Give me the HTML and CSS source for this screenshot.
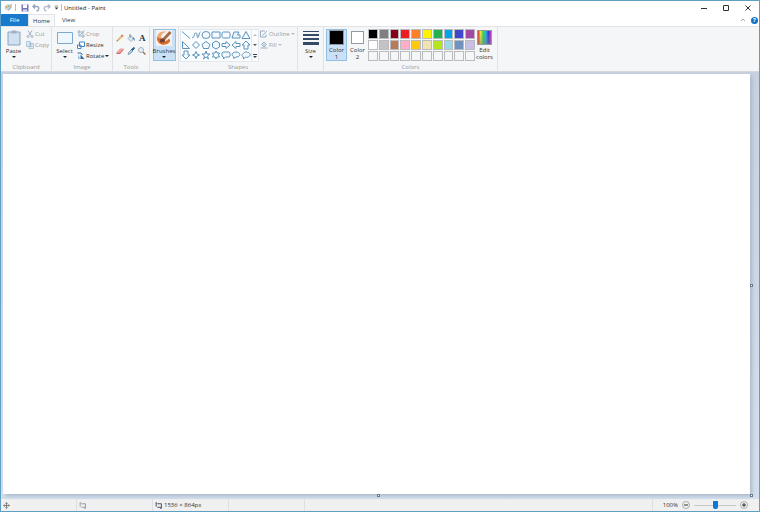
FILE: index.html
```
<!DOCTYPE html>
<html lang="en">
<head>
    <meta charset="UTF-8">
    <meta name="viewport" content="width=device-width, initial-scale=1.0">
    <title>Untitled - Paint</title>
    <link rel="stylesheet" href="styles.css">
</head>
<body>
    <div class="titlebar">
        <svg class="app-icon" viewBox="0 0 20 20"><path d="M2 10c0-5 5-7 11-6 5 1 5 6 2 9-4 4-13 3-13-3z" fill="#c3dcea" stroke="#9dbccd"/><circle cx="6" cy="9" r="2" fill="#e6a34b"/><circle cx="10" cy="7" r="2" fill="#7fb58d"/><path d="M10 17L17 2" stroke="#cf9a70" stroke-width="2"/></svg>
        <span class="divider"></span>
        <button class="quick save" aria-label="Save"><svg viewBox="0 0 16 16"><path d="M1 1h14v14H1z" fill="#7775b5"/><path d="M4 1h8v7H4z" fill="#fff"/><path d="M4 11h8v4H4z" fill="#dcdcf0"/></svg></button>
        <button class="quick" aria-label="Undo"><svg viewBox="0 0 16 16" fill="none" stroke="#97a5c4" stroke-width="3"><path d="M6 1L2 5l4 4M2 5h8c5 0 5 8-1 9"/></svg></button>
        <button class="quick" aria-label="Redo"><svg viewBox="0 0 16 16" fill="none" stroke="#b4bdce" stroke-width="3"><path d="M10 1l4 4-4 4M14 5H6c-5 0-5 8 1 9"/></svg></button>
        <button class="quick more" aria-label="Customize Quick Access Toolbar"><svg viewBox="0 0 8 8"><path d="M1 1h6v1H1zM1 4h6L4 7z" fill="#333"/></svg></button>
        <span class="divider"></span>
        <h1>Untitled - Paint</h1>
        <div class="window-buttons">
            <button aria-label="Minimize"><svg viewBox="0 0 6 6" fill="none" stroke="#333"><path d="M0 3.5h6"/></svg></button>
            <button aria-label="Maximize"><svg viewBox="0 0 6 6" fill="none" stroke="#333"><path d="M.5.5h5v5h-5z"/></svg></button>
            <button aria-label="Close"><svg viewBox="0 0 6 6" fill="none" stroke="#333"><path d="M.5.5l5 5M5.5.5l-5 5"/></svg></button>
        </div>
    </div>

    <nav class="tabs">
        <button class="tab file">File</button>
        <button class="tab active">Home</button>
        <button class="tab">View</button>
        <div class="tab-tools">
            <button aria-label="Minimize the Ribbon"><svg viewBox="0 0 6 6" fill="none" stroke="#aaa"><path d="M1 4l2-2 2 2"/></svg></button>
            <button class="help" aria-label="Help">?</button>
        </div>
    </nav>

    <div class="ribbon">
        <section class="group clipboard">
            <div class="tools">
                <button class="big"><svg class="big-icon" viewBox="0 0 32 32"><path d="M4 4h24v26H4z" fill="#cfe0f1" stroke="#8ba3bb" stroke-width="2"/><path d="M11 1h10v6H11z" fill="#9fb0c2"/></svg>Paste<i class="arrow"></i></button>
                <div class="stack">
                    <button disabled><svg viewBox="0 0 16 16" fill="none" stroke="#9db1c6" stroke-width="2"><path d="M4 1l6 10M12 1L6 11"/><circle cx="4" cy="13" r="2"/><circle cx="12" cy="13" r="2"/></svg>Cut</button>
                    <button disabled><svg viewBox="0 0 16 16" fill="#e4edf5" stroke="#9db8d2" stroke-width="1.5"><path d="M1 1h8v10H1zM6 5h9v10H6zM8 8h5M8 11h5"/></svg>Copy</button>
                </div>
            </div>
            <h2>Clipboard</h2>
        </section>

        <section class="group image">
            <div class="tools">
                <button class="big"><svg class="big-icon" viewBox="0 0 32 32"><path d="M1 5h30v22H1z" fill="#eef7fd" stroke="#7ea9cf" stroke-width="2"/></svg>Select<i class="arrow"></i></button>
                <div class="stack">
                    <button disabled><svg viewBox="0 0 16 16" fill="none" stroke="#9db1c6" stroke-width="2"><path d="M4 0v12h12M1 4h11v12M4 12L15 1"/></svg>Crop</button>
                    <button><svg viewBox="0 0 16 16" fill="#fff" stroke="#3f88c5" stroke-width="2"><path d="M5 2h10v9H5zM1 8h7v7H1z"/></svg>Resize</button>
                    <button><svg viewBox="0 0 16 16"><path d="M2 14V4l5 10z" fill="#9ac7e8"/><path d="M7 14h8L7 5z" fill="#2d6da6"/><path d="M1 2h7l3 4" fill="none" stroke="#2d6da6" stroke-width="2"/></svg>Rotate<i class="arrow"></i></button>
                </div>
            </div>
            <h2>Image</h2>
        </section>

        <section class="group drawing">
            <div class="tools">
                <div class="tool-grid">
                    <button aria-label="Pencil"><svg viewBox="0 0 16 16"><path d="M1 15l2-5L12 1l3 3-9 9z" fill="#e5b97a"/><path d="M12 1l3 3-2 2-3-3z" fill="#c27867"/><path d="M1 15l1-3 2 2z" fill="#555"/></svg></button>
                    <button aria-label="Fill with color"><svg viewBox="0 0 16 16"><path d="M2 9l6-6 6 6-6 6z" fill="#dce7ef" stroke="#60798f"/><path d="M7 8V1H5v5" fill="none" stroke="#60798f"/><path d="M11 7c4 0 5 3 4 7-2-1-1-4-4-5z" fill="#3e85c4"/></svg></button>
                    <button class="letter" aria-label="Text">A</button>
                    <button aria-label="Eraser"><svg viewBox="0 0 16 16"><path d="M1 11l7-8h7l-7 8z" fill="#f1a3a0"/><path d="M1 11h7v3H1zM8 11l7-8v3l-7 8z" fill="#cf6668"/></svg></button>
                    <button aria-label="Color picker"><svg viewBox="0 0 16 16"><path d="M2 15l1-4 6-6 3 3-6 6z" fill="#a9cae3" stroke="#57758f"/><path d="M8 4l4 4M10 5l2-3c2-2 4 0 2 2l-3 3z" fill="#315f91" stroke="#315f91" stroke-width="2"/></svg></button>
                    <button aria-label="Magnifier"><svg viewBox="0 0 16 16"><path d="M9 9l6 6" stroke="#a4774c" stroke-width="3"/><circle cx="6" cy="6" r="5" fill="#e5f1fa" stroke="#8a9cac" stroke-width="1.5"/></svg></button>
                </div>
            </div>
            <h2>Tools</h2>
        </section>

        <section class="group brushes">
            <button class="big selected"><svg class="big-icon" viewBox="0 0 32 32"><path d="M0 0h32v32H0z" fill="#f6f1ec"/><path d="M2 13c-2 18 18 21 26 10 1-5-3-7-5-3-4 4-11 3-12-4z" fill="#d96b2b"/><path d="M2 15C4 5 12 1 21 4c-8 1-11 5-11 13z" fill="#e9a87a"/><path d="M14 16L27 2l4 4-13 14z" fill="#a5683f"/><path d="M8 24c0-7 5-10 10-5 1 5-4 8-10 5z" fill="#6b4332"/></svg>Brushes<i class="arrow"></i></button>
        </section>

        <section class="group shapes">
            <div class="tools">
                <div class="gallery">
                    <div class="shape-grid">
                        <button aria-label="Line"><svg viewBox="0 0 20 20"><path d="M2 3l16 14"/></svg></button>
                        <button aria-label="Curve"><svg viewBox="0 0 20 20"><path d="M2 15C7 18 6 4 10 6s1 11 4 9 1-10 5-11"/></svg></button>
                        <button aria-label="Oval"><svg viewBox="0 0 20 20"><ellipse cx="10" cy="10" rx="8" ry="7"/></svg></button>
                        <button aria-label="Rectangle"><svg viewBox="0 0 20 20"><path d="M2 4h16v12H2z"/></svg></button>
                        <button aria-label="Rounded rectangle"><svg viewBox="0 0 20 20"><rect x="2" y="4" width="16" height="12" rx="3"/></svg></button>
                        <button aria-label="Polygon"><svg viewBox="0 0 20 20"><path d="M2 16L6 4h10l-3 6h5v6z"/></svg></button>
                        <button aria-label="Triangle"><svg viewBox="0 0 20 20"><path d="M10 3l8 14H2z"/></svg></button>
                        <button aria-label="Right triangle"><svg viewBox="0 0 20 20"><path d="M3 3v14h14z"/></svg></button>
                        <button aria-label="Diamond"><svg viewBox="0 0 20 20"><path d="M10 3l7 7-7 7-7-7z"/></svg></button>
                        <button aria-label="Pentagon"><svg viewBox="0 0 20 20"><path d="M10 3l8 6-3 8H5L2 9z"/></svg></button>
                        <button aria-label="Hexagon"><svg viewBox="0 0 20 20"><path d="M10 2l7 4v8l-7 4-7-4V6z"/></svg></button>
                        <button aria-label="Right arrow"><svg viewBox="0 0 20 20"><path d="M2 7h8V3l8 7-8 7v-4H2z"/></svg></button>
                        <button aria-label="Left arrow"><svg viewBox="0 0 20 20"><path d="M18 7h-8V3l-8 7 8 7v-4h8z"/></svg></button>
                        <button aria-label="Up arrow"><svg viewBox="0 0 20 20"><path d="M6 18v-8H2l8-8 8 8h-4v8z"/></svg></button>
                        <button aria-label="Down arrow"><svg viewBox="0 0 20 20"><path d="M6 2v8H2l8 8 8-8h-4V2z"/></svg></button>
                        <button aria-label="Four-point star"><svg viewBox="0 0 20 20"><path d="M10 3l2 5 5 2-5 2-2 5-2-5-5-2 5-2z"/></svg></button>
                        <button aria-label="Five-point star"><svg viewBox="0 0 20 20"><path d="M10 2l2 6h6l-5 4 2 6-5-4-5 4 2-6-5-4h6z"/></svg></button>
                        <button aria-label="Six-point star"><svg viewBox="0 0 20 20"><path d="M10 2l2 4h5l-2 4 2 4h-5l-2 4-2-4H3l2-4-2-4h5z"/></svg></button>
                        <button aria-label="Rounded rectangular callout"><svg viewBox="0 0 20 20"><path d="M4 4h12l2 2v6l-2 2H9l-4 4v-4H4l-2-2V6z"/></svg></button>
                        <button aria-label="Oval callout"><svg viewBox="0 0 20 20"><path d="M6 14C0 12 1 4 10 4s11 10 0 10l-5 3z"/></svg></button>
                        <button aria-label="Cloud callout"><svg viewBox="0 0 20 20"><path d="M5 14c-5-1-3-6 0-7 1-4 7-4 8-2 5-1 7 6 3 8-2 2-5 2-7 1l-4 4z"/></svg></button>
                    </div>
                    <div class="scroll">
                        <button aria-label="Row up"><svg viewBox="0 0 6 6"><path d="M1 4h4L3 2z" fill="#bbb"/></svg></button>
                        <button aria-label="Row down"><svg viewBox="0 0 6 6"><path d="M1 2h4L3 4z" fill="#555"/></svg></button>
                        <button aria-label="More shapes"><svg viewBox="0 0 6 6"><path d="M1 1h4v1H1zM1 3h4L3 5z" fill="#345"/></svg></button>
                    </div>
                </div>
                <div class="stack">
                    <button disabled><svg viewBox="0 0 16 16" fill="none" stroke="#9db1c6" stroke-width="2"><path d="M12 9v5H1V2h9M5 11l9-9"/></svg>Outline<i class="arrow"></i></button>
                    <button disabled><svg viewBox="0 0 16 16" fill="#ccdcec" stroke="#9db1c6" stroke-width="2"><path d="M3 7l5-5 5 5-5 5zM1 14h14"/></svg>Fill<i class="arrow"></i></button>
                </div>
            </div>
            <h2>Shapes</h2>
        </section>

        <section class="group size">
            <button class="big"><svg class="big-icon" viewBox="0 0 16 16" fill="#344a66"><path d="M0 1h16v1H0zM0 4h16v2H0zM0 8h16v2H0zM0 12h16v3H0z"/></svg>Size<i class="arrow"></i></button>
        </section>

        <section class="group colors">
            <div class="tools">
                <button class="big color-choice selected"><span class="chip black"></span>Color<br>1</button>
                <button class="big color-choice second"><span class="chip white"></span>Color<br>2</button>
                <div class="palette">
                    <button class="black" aria-label="Black"></button>
                    <button class="gray" aria-label="Gray-50%"></button>
                    <button class="dark-red" aria-label="Dark red"></button>
                    <button class="red" aria-label="Red"></button>
                    <button class="orange" aria-label="Orange"></button>
                    <button class="yellow" aria-label="Yellow"></button>
                    <button class="green" aria-label="Green"></button>
                    <button class="turquoise" aria-label="Turquoise"></button>
                    <button class="indigo" aria-label="Indigo"></button>
                    <button class="purple" aria-label="Purple"></button>
                    <button class="white" aria-label="White"></button>
                    <button class="light-gray" aria-label="Gray-25%"></button>
                    <button class="brown" aria-label="Brown"></button>
                    <button class="rose" aria-label="Rose"></button>
                    <button class="gold" aria-label="Gold"></button>
                    <button class="light-yellow" aria-label="Light yellow"></button>
                    <button class="lime" aria-label="Lime"></button>
                    <button class="light-turquoise" aria-label="Light turquoise"></button>
                    <button class="blue-gray" aria-label="Blue-gray"></button>
                    <button class="lavender" aria-label="Lavender"></button>
                    <button aria-label="Custom 1"></button>
                    <button aria-label="Custom 2"></button>
                    <button aria-label="Custom 3"></button>
                    <button aria-label="Custom 4"></button>
                    <button aria-label="Custom 5"></button>
                    <button aria-label="Custom 6"></button>
                    <button aria-label="Custom 7"></button>
                    <button aria-label="Custom 8"></button>
                    <button aria-label="Custom 9"></button>
                    <button aria-label="Custom 10"></button>
                </div>
                <button class="big edit"><span class="chip rainbow"></span>Edit<br>colors</button>
            </div>
            <h2>Colors</h2>
        </section>
    </div>

    <main class="workspace">
        <div class="canvas">
            <span class="handle right"></span>
            <span class="handle bottom"></span>
            <span class="handle corner"></span>
        </div>
    </main>

    <footer class="status">
        <div class="cell"><svg viewBox="0 0 12 12" fill="none" stroke="#444"><path d="M6 1v10M1 6h10M4 3l2-2 2 2M4 9l2 2 2-2M3 4L1 6l2 2M9 4l2 2-2 2"/></svg></div>
        <div class="cell"><svg viewBox="0 0 12 12" fill="none" stroke="#667"><path d="M4 3h7v6H4M2 1v7M1 2l1-1 1 1M9 11h2V9"/></svg></div>
        <div class="cell"><svg viewBox="0 0 12 12" fill="none" stroke="#345" stroke-width="1.5"><path d="M4 3h7v6H4M2 1v7M1 2l1-1 1 1M9 11h2V9"/></svg>1536 × 864px</div>
        <div class="cell"></div>
        <div class="zoom">
            <label for="zoom">100%</label>
            <button aria-label="Zoom out"><svg viewBox="0 0 16 16" fill="none" stroke="#999" stroke-width="1.5"><circle cx="8" cy="8" r="7"/><path d="M4 8h8" stroke="#333" stroke-width="2"/></svg></button>
            <input type="range" id="zoom" min="0" max="100" value="50">
            <button aria-label="Zoom in"><svg viewBox="0 0 16 16" fill="none" stroke="#999" stroke-width="1.5"><circle cx="8" cy="8" r="7"/><path d="M4 8h8M8 4v8" stroke="#333" stroke-width="2"/></svg></button>
        </div>
    </footer>
</body>
</html>
```
FILE: styles.css
```
* {
    box-sizing: border-box;
}
body {
    display: flex;
    flex-direction: column;
    min-height: 100vh;
    margin: 0;
    border: 1px solid #5f9fc4;
    background-color: #fff;
    color: #333;
    font: 6px/8px "Open Sans", "Noto Sans", sans-serif;
}
button {
    display: flex;
    align-items: center;
    margin: 0;
    padding: 0;
    border: 0;
    background: none;
    color: inherit;
    font: inherit;
}
svg {
    display: block;
    flex-shrink: 0;
    width: 8px;
    height: 8px;
}
h1, h2 {
    margin: 0;
    font-size: 6px;
    font-weight: normal;
}
.titlebar {
    display: flex;
    align-items: center;
    gap: 2px;
    height: 13px;
    padding-left: 3px;
}
.titlebar h1 {
    color: #222;
}
.app-icon {
    width: 9px;
    height: 9px;
}
.divider {
    width: 1px;
    height: 7px;
    background-color: #bbb;
}
.quick {
    justify-content: center;
    width: 9px;
}
.save {
    margin-left: 2px;
}
.quick.more {
    width: 6px;
}
.quick.more svg {
    width: 5px;
    height: 5px;
}
.window-buttons {
    display: flex;
    margin-left: auto;
}
.window-buttons button {
    justify-content: center;
    width: 22px;
    height: 13px;
}
.window-buttons svg {
    width: 6px;
    height: 6px;
}
.tabs {
    display: flex;
    height: 12px;
}
.tab {
    justify-content: center;
    width: 27px;
}
.tab.file {
    background-color: #1979ca;
    color: #fff;
}
.tab.active {
    border: 1px solid #e2e4e7;
    border-width: 1px 1px 0;
    background-color: #f8f9fb;
}
.tab-tools {
    display: flex;
    align-items: center;
    gap: 5px;
    margin-left: auto;
    padding-right: 1px;
}
.tab-tools svg {
    width: 6px;
    height: 6px;
}
.help {
    justify-content: center;
    width: 7px;
    height: 7px;
    border-radius: 50%;
    background-color: #1473c4;
    color: #fff;
    font-weight: bold;
}
.ribbon {
    display: flex;
    height: 46px;
    border-top: 1px solid #e2e4e7;
    border-bottom: 1px solid #d5dae0;
    background-color: #f5f6f7;
}
.group {
    display: flex;
    flex-direction: column;
    justify-content: space-between;
    border-right: 1px solid #e0e2e5;
}
.group h2 {
    color: #9a9a9a;
    text-align: center;
}
.clipboard {
    width: 51px;
}
.image {
    width: 61px;
}
.drawing {
    width: 37px;
}
.brushes {
    width: 29px;
}
.shapes {
    width: 119px;
}
.size {
    width: 26px;
}
.colors {
    width: 174px;
}
.tools {
    display: flex;
    padding: 2px 1px 0;
}
.big {
    flex-direction: column;
    flex-shrink: 0;
    width: 23px;
    height: 32px;
    padding-top: 1px;
    line-height: 7px;
}
.big-icon {
    width: 16px;
    height: 16px;
    margin-bottom: 2px;
}
.size .big, .brushes .big {
    margin: 2px auto 0;
}
.selected {
    border: 1px solid #92c0e0;
    background-color: #c9e0f7;
    padding-top: 0;
}
.arrow {
    width: 0;
    height: 0;
    margin-top: 1px;
    border: 2px solid transparent;
    border-top-color: #222;
    border-bottom: 0;
}
.stack {
    display: flex;
    flex-direction: column;
    gap: 3px;
    padding: 1px 0 0 1px;
}
.stack button {
    gap: 1px;
    height: 8px;
}
.stack .arrow {
    margin-top: 0;
}
.stack button:disabled {
    color: #9b9b9b;
}
.stack button:disabled .arrow {
    border-top-color: #bbb;
}
.tool-grid {
    display: grid;
    grid-template-columns: repeat(3, 1fr);
    row-gap: 5px;
    width: 100%;
    padding-top: 5px;
}
.tool-grid button {
    justify-content: center;
    height: 8px;
}
.tool-grid .letter {
    color: #26384d;
    font: bold 9px/8px "Liberation Serif", serif;
}
.gallery {
    display: flex;
    height: 33px;
    border: 1px solid #e3e8ee;
    background-color: #fafcfe;
}
.shape-grid {
    display: grid;
    grid-template-columns: repeat(7, 10px);
    grid-template-rows: repeat(3, 10px);
}
.shape-grid svg {
    width: 10px;
    height: 10px;
    fill: #f4faff;
    stroke: #5b94bb;
    stroke-width: 2;
}
.scroll {
    display: grid;
    width: 7px;
    border-left: 1px solid #e3e8ee;
}
.scroll svg {
    width: 6px;
    height: 6px;
}
.color-choice {
    width: 21px;
}
.colors .tools {
    padding-left: 2px;
}
.chip {
    flex-shrink: 0;
    width: 15px;
    height: 15px;
    margin-bottom: 2px;
    border: 1px solid #8f9aa5;
}
.second .chip {
    width: 13px;
    height: 13px;
    margin-top: 1px;
    margin-bottom: 3px;
}
.palette {
    display: grid;
    grid-template-columns: repeat(10, 1fr);
    grid-template-rows: repeat(3, 10px);
    gap: 1px;
    width: 107px;
}
.palette button {
    border: 1px solid #b9bbbe;
}
.edit {
    width: 19px;
}
.rainbow {
    border-color: #999;
    background: linear-gradient(rgba(255,255,255,0), rgba(128,128,128,.5)), linear-gradient(to right, #e22, #ee4, #2d4, #2be, #33d, #d3c);
}
.black { background-color: #000; }
.gray { background-color: #7f7f7f; }
.dark-red { background-color: #880015; }
.red { background-color: #ed1c24; }
.orange { background-color: #ff7f27; }
.yellow { background-color: #fff200; }
.green { background-color: #22b14c; }
.turquoise { background-color: #00a2e8; }
.indigo { background-color: #3f48cc; }
.purple { background-color: #a349a4; }
.white { background-color: #fff; }
.light-gray { background-color: #c3c3c3; }
.brown { background-color: #b97a57; }
.rose { background-color: #ffaec9; }
.gold { background-color: #ffc90e; }
.light-yellow { background-color: #efe4b0; }
.lime { background-color: #b5e61d; }
.light-turquoise { background-color: #99d9ea; }
.blue-gray { background-color: #7092be; }
.lavender { background-color: #c8bfe7; }
.workspace {
    display: flex;
    flex: 1;
    padding: 2px 9px 5px 2px;
    background: linear-gradient(#c8d1df, #d3e0ef);
}
.canvas {
    position: relative;
    flex: 1;
    background-color: #fff;
    box-shadow: 2px 2px 4px #a9b7c9;
}
.handle {
    position: absolute;
    width: 3px;
    height: 3px;
    border: 1px solid #6c7885;
    background-color: #fff;
}
.handle.right {
    top: 50%;
    right: -3px;
}
.handle.bottom {
    left: 50%;
    bottom: -3px;
}
.handle.corner {
    right: -3px;
    bottom: -3px;
}
.status {
    display: flex;
    height: 12px;
    background-color: #f0f0f0;
}
.cell {
    display: flex;
    align-items: center;
    gap: 2px;
    width: 76px;
    padding-left: 2px;
    border-right: 1px solid #dfdfdf;
}
.cell svg {
    width: 7px;
    height: 7px;
}
.zoom {
    display: flex;
    align-items: center;
    gap: 4px;
    margin-left: auto;
    padding: 0 11px 0 10px;
    border-left: 1px solid #dfdfdf;
}
.zoom input {
    width: 42px;
    height: 8px;
    margin: 0;
    appearance: none;
    background: linear-gradient(#c8c8c8, #c8c8c8) center / 100% 1px no-repeat;
}
.zoom input::-webkit-slider-thumb {
    appearance: none;
    width: 5px;
    height: 8px;
    border-radius: 0 0 2px 2px;
    background-color: #0a78d6;
}
```
